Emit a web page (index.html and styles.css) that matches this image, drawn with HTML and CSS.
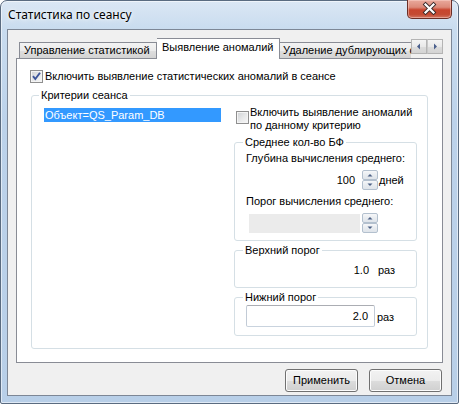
FILE: index.html
```html
<!DOCTYPE html>
<html lang="ru">
<head>
<meta charset="utf-8">
<title>Статистика по сеансу</title>
<link rel="stylesheet" href="styles.css">
</head>
<body>
<div class="window">
  <div class="titlebar">
    <span class="title">Статистика по сеансу</span>
    <div class="close">
      <svg width="45" height="19" viewBox="0 0 45 19">
        <path d="M18.5 5.5 L26.5 13.5 M26.5 5.5 L18.5 13.5" stroke="#3a2a2a" stroke-width="4" stroke-linecap="square"/>
        <path d="M18.5 5.5 L26.5 13.5 M26.5 5.5 L18.5 13.5" stroke="#ffffff" stroke-width="2.2" stroke-linecap="square"/>
      </svg>
    </div>
  </div>
  <div class="client">
    <div class="tabstrip">
      <div class="tab first">Управление статистикой</div>
      <div class="tab active">Выявление аномалий</div>
      <div class="tab clipped">Удаление дублирующих событий</div>
      <div class="scroller">
        <div class="sbtn"><svg width="14" height="13" viewBox="0 0 14 13"><polygon points="5,6.5 8,3.5 8,9.5" fill="#4a5f8c"/></svg></div>
        <div class="sbtn"><svg width="14" height="13" viewBox="0 0 14 13"><polygon points="9,6.5 6,3.5 6,9.5" fill="#4a5f8c"/></svg></div>
      </div>
    </div>
    <div class="panel">
      <div class="check-row">
        <span class="cb checked"><svg width="11" height="11" viewBox="0 0 11 11"><path d="M2 5.2 L4.3 8 L9 1.8" fill="none" stroke="#3d559a" stroke-width="1.9"/></svg></span>
        <span>Включить выявление статистических аномалий в сеансе</span>
      </div>
      <div class="group main">
        <div class="legend">Критерии сеанса</div>
        <div class="main-body">
          <div class="list">
            <div class="item sel">Объект=QS_Param_DB</div>
          </div>
          <div class="right">
            <div class="check-row two">
              <span class="cb"></span>
              <span class="two-lines">Включить выявление аномалий<br>по данному критерию</span>
            </div>
            <div class="group sub avg">
              <div class="legend">Среднее кол-во БФ</div>
              <div class="lbl first-lbl">Глубина вычисления среднего:</div>
              <div class="num-row">
                <div class="numbox">100</div>
                <div class="spin">
                  <div class="sp up"><svg width="14" height="8" viewBox="0 0 14 8"><polygon points="4.5,5.5 7,3 9.5,5.5" fill="#4d6185"/></svg></div>
                  <div class="sp down"><svg width="14" height="8" viewBox="0 0 14 8"><polygon points="4.5,2.5 7,5 9.5,2.5" fill="#4d6185"/></svg></div>
                </div>
                <span class="unit">дней</span>
              </div>
              <div class="lbl">Порог вычисления среднего:</div>
              <div class="num-row">
                <div class="numbox disabled"></div>
                <div class="spin">
                  <div class="sp up"><svg width="14" height="8" viewBox="0 0 14 8"><polygon points="4.5,5.5 7,3 9.5,5.5" fill="#4d6185"/></svg></div>
                  <div class="sp down"><svg width="14" height="8" viewBox="0 0 14 8"><polygon points="4.5,2.5 7,5 9.5,2.5" fill="#4d6185"/></svg></div>
                </div>
              </div>
            </div>
            <div class="group sub upper">
              <div class="legend">Верхний порог</div>
              <div class="val-row">
                <span class="val">1.0</span>
                <span class="unit2">раз</span>
              </div>
            </div>
            <div class="group sub lower">
              <div class="legend">Нижний порог</div>
              <div class="box-row">
                <div class="textbox">2.0</div>
                <span class="unit3">раз</span>
              </div>
            </div>
          </div>
        </div>
      </div>
    </div>
    <div class="buttons">
      <div class="btn">Применить</div>
      <div class="btn">Отмена</div>
    </div>
  </div>
</div>
</body>
</html>
```

FILE: styles.css
```css
* { box-sizing: border-box; }
html, body { margin: 0; padding: 0; }
body {
  width: 459px;
  height: 404px;
  overflow: hidden;
  background: #ffffff;
  font-family: "Liberation Sans", Arial, sans-serif;
  font-size: 11px;
  color: #000;
}
.window {
  width: 459px;
  height: 404px;
  border: 1px solid #5a6b80;
  border-radius: 7px 7px 2px 2px;
  background: linear-gradient(to bottom, #dbe7f4 0px, #c9dcef 28px, #bcd2ea 120px, #b8cfe8 100%);
  box-shadow: inset 0 0 0 1px rgba(255,255,255,0.55);
  display: flex;
  flex-direction: column;
}
.titlebar {
  height: 28px;
  flex: none;
  display: flex;
  align-items: flex-start;
  padding-left: 7px;
}
.title {
  font-family: "Noto Sans", "Open Sans", sans-serif;
  font-size: 12px;
  line-height: 16px;
  margin-top: 6px;
  color: #000;
  text-shadow: 0 0 6px rgba(255,255,255,0.95), 0 0 3px rgba(255,255,255,0.9);
}
.close {
  margin-left: auto;
  margin-right: 6px;
  margin-top: -1px;
  width: 45px;
  height: 19px;
  border: 1px solid #6b2e26;
  border-top: none;
  border-radius: 0 0 5px 5px;
  background: linear-gradient(to bottom, #e9a99c 0%, #dc8a79 40%, #c8452e 55%, #c44a32 80%, #d27562 100%);
  box-shadow: inset 0 0 0 1px rgba(255,220,210,0.45);
}
.close svg { display: block; margin: -1px 0 0 -1px; }
.client {
  flex: 1;
  margin: 0 6px 7px 6px;
  border: 1px solid #7d8796;
  background: #f0f0f0;
  padding: 8px 8px 0 8px;
  display: flex;
  flex-direction: column;
}
.tabstrip {
  height: 20px;
  flex: none;
  display: flex;
  align-items: flex-end;
  padding-left: 3px;
}
.tab {
  height: 16px;
  border: 1px solid #898c95;
  border-bottom: none;
  background: linear-gradient(to bottom, #f3f3f3 0%, #ebebeb 50%, #dedede 51%, #d3d3d3 100%);
  line-height: 14px;
  padding-left: 4px;
  white-space: nowrap;
}
.tab.first { width: 138px; border-right: none; }
.tab.first { border-right: 1px solid #898c95; }
.tab.active {
  width: 123px;
  height: 21px;
  margin-bottom: -1px;
  background: #ffffff;
  position: relative;
  z-index: 2;
  padding-left: 5px;
  line-height: 17px;
  border-left: none;
}
.tab.clipped {
  flex: 1;
  min-width: 0;
  overflow: hidden;
  border-left: none;
  border-right: none;
  padding-left: 3px;
}
.scroller {
  align-self: flex-start;
  margin-top: 1px;
  display: flex;
  width: 32px;
  height: 15px;
}
.sbtn {
  width: 16px;
  height: 15px;
  border: 1px solid #b4b4b4;
  background: linear-gradient(to bottom, #f4f4f4 0%, #e9e9e9 50%, #dcdcdc 51%, #d4d4d4 100%);
}
.sbtn + .sbtn { border-left-color: #c8c8c8; }
.sbtn svg { display: block; }
.panel {
  height: 305px;
  flex: none;
  border: 1px solid #898c95;
  background: #ffffff;
  position: relative;
  z-index: 1;
  padding: 11px 14px 0 13px;
}
.check-row {
  display: flex;
  align-items: center;
  height: 13px;
  line-height: 13px;
  white-space: nowrap;
}
.cb {
  width: 13px;
  height: 13px;
  flex: none;
  border: 1px solid #8f8f8f;
  background: linear-gradient(135deg, #cfd1d4 0%, #e8e9ea 55%, #f7f7f7 100%);
  box-shadow: inset 0 0 0 1px #f4f4f4;
  margin-right: 2px;
  position: relative;
}
.cb svg { display: block; position: absolute; left: 0; top: 0; }
.group {
  border: 1px solid #d5dfe5;
  border-radius: 3px;
}
.legend {
  display: table;
  margin: -7px 0 0 7px;
  padding: 0 2px;
  background: #ffffff;
  line-height: 13px;
  white-space: nowrap;
}
.group.main {
  margin: 12px 0 0 1px;
  width: 397px;
  height: 254px;
}
.main-body {
  display: flex;
  margin-top: 6px;
  padding-left: 12px;
}
.list { width: 177px; }
.item {
  height: 14px;
  line-height: 14px;
  padding-left: 1px;
  white-space: nowrap;
}
.item.sel { background: #3399ff; color: #ffffff; }
.right {
  margin-left: auto;
  margin-right: 10px;
  width: 183px;
}
.check-row.two {
  height: auto;
  align-items: flex-start;
  padding-left: 2px;
}
.check-row.two .cb { margin-top: 3px; margin-right: 1px; }
.two-lines { margin-top: -2px; line-height: 13px; }
.group.sub .legend { margin-left: 8px; }
.group.avg { margin-top: 10px; padding-bottom: 7px; }
.lbl {
  line-height: 13px;
  padding-left: 11px;
  margin-top: 5px;
  white-space: nowrap;
}
.lbl.first-lbl { margin-top: 3px; }
.num-row {
  display: flex;
  align-items: center;
  margin-top: 5px;
  height: 20px;
  padding-left: 14px;
}
.numbox {
  width: 111px;
  height: 20px;
  line-height: 20px;
  text-align: right;
  padding-right: 5px;
  background: #ffffff;
}
.numbox.disabled { background: #ebebeb; height: 19px; margin-top: 1px; }
.spin {
  margin-left: 2px;
  width: 16px;
  height: 20px;
  display: flex;
  flex-direction: column;
}
.sp {
  height: 10px;
  border: 1px solid #b3c0ce;
  border-radius: 2px;
  background: linear-gradient(to bottom, #f6f7f9 0%, #e8ecf0 50%, #dfe4ea 100%);
}
.sp svg { display: block; }
.unit { margin-left: 1px; line-height: 13px; }
.group.upper { margin-top: 9px; height: 38px; }
.val-row {
  display: flex;
  align-items: center;
  margin-top: 7px;
  line-height: 13px;
  padding-left: 14px;
}
.val { width: 120px; text-align: right; }
.unit2 { margin-left: 9px; }
.group.lower { margin-top: 9px; height: 39px; }
.box-row {
  display: flex;
  align-items: center;
  margin-top: 1px;
  padding-left: 11px;
}
.textbox {
  width: 129px;
  height: 22px;
  line-height: 20px;
  border: 1px solid #abadb3;
  border-color: #abadb3 #c2cbd6 #c9d3de #c2cbd6;
  border-radius: 2px;
  background: #ffffff;
  text-align: right;
  padding-right: 6px;
}
.unit3 { margin-left: 2px; line-height: 13px; margin-top: 3px; }
.buttons {
  display: flex;
  justify-content: flex-end;
  gap: 11px;
  margin-top: 6px;
  padding-right: 1px;
}
.btn {
  width: 73px;
  height: 23px;
  border: 1px solid #707070;
  border-radius: 3px;
  background: linear-gradient(to bottom, #f2f2f2 0%, #ebebeb 50%, #dddddd 51%, #cfcfcf 100%);
  box-shadow: inset 0 0 0 1px #fcfcfc;
  text-align: center;
  line-height: 21px;
  white-space: nowrap;
}
```
